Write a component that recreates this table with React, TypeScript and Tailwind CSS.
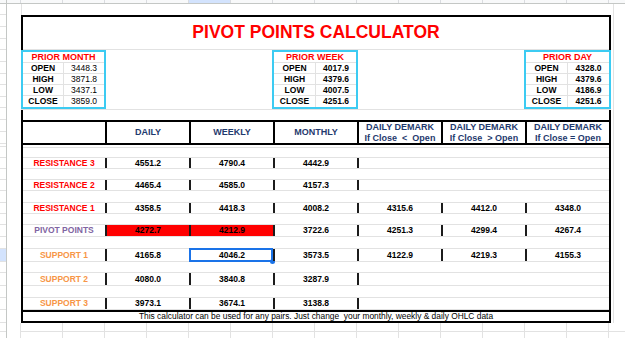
import React from 'react';

interface Prior {
  title: string;
  width: string;
  labelWidth: string;
  bold: boolean;
  rows: [string, string][];
}

interface Level {
  label: string;
  color: string;
  values: (string | null)[];
  red?: boolean;
  selected?: number;
}

const priors: Prior[] = [
  {
    title: 'PRIOR MONTH',
    width: 'w-[85px]',
    labelWidth: 'w-[41px]',
    bold: false,
    rows: [['OPEN', '3448.3'], ['HIGH', '3871.8'], ['LOW', '3437.1'], ['CLOSE', '3859.0']],
  },
  {
    title: 'PRIOR WEEK',
    width: 'w-[86px]',
    labelWidth: 'w-[42px]',
    bold: true,
    rows: [['OPEN', '4017.9'], ['HIGH', '4379.6'], ['LOW', '4007.5'], ['CLOSE', '4251.6']],
  },
  {
    title: 'PRIOR DAY',
    width: 'w-[87px]',
    labelWidth: 'w-[42px]',
    bold: true,
    rows: [['OPEN', '4328.0'], ['HIGH', '4379.6'], ['LOW', '4186.9'], ['CLOSE', '4251.6']],
  },
];

const headers: string[][] = [
  ['DAILY'],
  ['WEEKLY'],
  ['MONTHLY'],
  ['DAILY DEMARK', 'If Close  <  Open'],
  ['DAILY DEMARK', 'If Close  > Open'],
  ['DAILY DEMARK', 'If Close = Open'],
];

const RED = 'text-[#ff0000]';
const PURPLE = 'text-[#8064a2]';
const ORANGE = 'text-[#f79646]';

// one entry per sheet row between header and footer, null = blank spacer row
const rows: { h: string; level: Level | null }[] = [
  { h: 'h-[10px]', level: null },
  { h: 'h-[11px]', level: { label: 'RESISTANCE 3', color: RED, values: ['4551.2', '4790.4', '4442.9', null, null, null] } },
  { h: 'h-[11px]', level: null },
  { h: 'h-[11px]', level: { label: 'RESISTANCE 2', color: RED, values: ['4465.4', '4585.0', '4157.3', null, null, null] } },
  { h: 'h-[12px]', level: null },
  { h: 'h-[11px]', level: { label: 'RESISTANCE 1', color: RED, values: ['4358.5', '4418.3', '4008.2', '4315.6', '4412.0', '4348.0'] } },
  { h: 'h-[11px]', level: null },
  { h: 'h-[12px]', level: { label: 'PIVOT POINTS', color: PURPLE, red: true, values: ['4272.7', '4212.9', '3722.6', '4251.3', '4299.4', '4267.4'] } },
  { h: 'h-[12px]', level: null },
  { h: 'h-[13px]', level: { label: 'SUPPORT 1', color: ORANGE, selected: 1, values: ['4165.8', '4046.2', '3573.5', '4122.9', '4219.3', '4155.3'] } },
  { h: 'h-[11px]', level: null },
  { h: 'h-[13px]', level: { label: 'SUPPORT 2', color: ORANGE, values: ['4080.0', '3840.8', '3287.9', null, null, null] } },
  { h: 'h-[12px]', level: null },
  { h: 'h-[12px]', level: { label: 'SUPPORT 3', color: ORANGE, values: ['3973.1', '3674.1', '3138.8', null, null, null] } },
];

// row header strip on the far left (sheet rows)
const sheetRows = [
  'h-[11px]', 'h-[12px]', 'h-[12px]', 'h-[11px]', 'h-[12px]', 'h-[12px]', 'h-[11px]', 'h-[12px]',
  'h-[11px]', 'h-[12px]', 'h-[12px]', 'h-[12px]', 'h-[3px]', 'h-[11px]', 'h-[11px]', 'h-[11px]',
  'h-[11px]', 'h-[12px]', 'h-[11px]', 'h-[11px]', 'h-[12px]', 'h-[12px]', 'h-[13px]', 'h-[11px]',
  'h-[13px]', 'h-[12px]', 'h-[12px]', 'h-[13px]',
];

const sheetCols = Array.from({ length: 14 }, (_, i) => i);

function PriorBox({ prior }: { prior: Prior }) {
  return (
    <div className={`${prior.width} h-[59px] border-2 border-[#3ccbf2] bg-white flex flex-col`}>
      <div className="h-[11px] border-b border-[#e2e2e2] flex items-center justify-center text-[9px] leading-none font-bold text-[#ff0000]">
        {prior.title}
      </div>
      {prior.rows.map(([k, v], i) => (
        <div key={k} className={`h-[11px] flex ${i < 3 ? 'border-b border-[#e2e2e2]' : ''}`}>
          <div className={`${prior.labelWidth} border-r border-[#e2e2e2] flex items-center justify-center text-[8.5px] leading-none font-bold`}>
            {k}
          </div>
          <div className={`flex-1 flex items-center justify-center text-[8.5px] leading-none ${prior.bold ? 'font-bold' : 'font-normal'}`}>
            {v}
          </div>
        </div>
      ))}
    </div>
  );
}

function DataRow({ h, level }: { h: string; level: Level | null }) {
  return (
    <div className={`${h} flex border-b border-[#e2e2e2]`}>
      <div className={`w-[82px] flex items-center justify-center text-[8.5px] leading-none font-bold ${level?.color ?? ''}`}>
        {level?.label}
      </div>
      {headers.map((_, i) => {
        const v = level?.values[i] ?? null;
        const prev = i > 0 ? level?.values[i - 1] ?? null : null;
        const edge = v !== null || prev !== null;
        const red = level?.red && i < 2;
        return (
          <div
            key={i}
            className={`relative w-[84px] flex items-center justify-center text-[8.5px] leading-none font-bold ${
              edge ? 'border-l-2 border-[#1c1c1c]' : 'border-l-2 border-transparent'
            } ${red ? 'bg-[#ff0000]' : ''}`}
          >
            {v}
            {level?.selected === i && (
              <>
                <span className="absolute -left-[2px] -top-[1px] right-0 -bottom-[1px] border-2 border-[#1a73e8]" />
                <span className="absolute -right-[2px] -bottom-[3px] w-[5px] h-[5px] rounded-full bg-[#1a73e8]" />
              </>
            )}
          </div>
        );
      })}
    </div>
  );
}

export default function App() {
  return (
    <div className="w-[625px] h-[338px] overflow-hidden bg-white flex flex-col text-black font-['Liberation_Sans',Arial,sans-serif]">
      {/* sheet column headers */}
      <div className="h-[4px] flex border-b border-[#c4c7c5] bg-[#f8f9fa]">
        <div className="w-[7px] border-r border-[#c4c7c5]" />
        <div className="w-[14px] border-r border-[#dadce0]" />
        {sheetCols.map((i) => (
          <div key={i} className={`w-[42px] border-r border-[#dadce0] ${i === 4 ? 'bg-[#d3e3fd]' : ''}`} />
        ))}
      </div>

      <div className="flex">
        {/* sheet row headers */}
        <div className="w-[7px] flex flex-col border-r border-[#c4c7c5]">
          {sheetRows.map((h, i) => (
            <div key={i} className={`${h} border-b border-[#e2e2e2] ${i === 22 ? 'bg-[#d3e3fd]' : ''}`} />
          ))}
        </div>
        <div className="w-[14px]" />

        <div className="w-[590px] flex flex-col">
          <div className="h-[11px] border-l border-[#e2e2e2]" />

          {/* calculator */}
          <div className="h-[308px] border-2 border-black flex flex-col">
            <div className="h-[33px] border-b border-[#e2e2e2] flex items-center justify-center text-[17.5px] leading-none font-bold text-[#ff0000]">
              PIVOT POINTS CALCULATOR
            </div>

            <div className="h-[60px] border-b border-[#e2e2e2] -mx-[2px]">
              <div className="flex justify-between items-start">
                {priors.map((p) => (
                  <PriorBox key={p.title} prior={p} />
                ))}
              </div>
            </div>

            <div className="mt-[10px] h-[25px] border-y-2 border-black flex">
              <div className="w-[82px]" />
              {headers.map((lines, i) => (
                <div
                  key={i}
                  className="w-[84px] border-l-2 border-black flex flex-col items-center justify-center text-[9px] leading-[11px] font-bold text-[#1f3a6e] whitespace-pre"
                >
                  {lines.map((l) => (
                    <span key={l}>{l}</span>
                  ))}
                </div>
              ))}
            </div>

            <div className="h-[3px] border-b border-[#e2e2e2]" />

            {rows.map((r, i) => (
              <DataRow key={i} h={r.h} level={r.level} />
            ))}

            <div className="flex-1 border-t-2 border-black flex items-center justify-center text-[8.4px] leading-none whitespace-pre">
              This calculator can be used for any pairs. Just change  your monthly, weekly &amp; daily OHLC data
            </div>
          </div>
        </div>

        <div className="w-[14px] flex">
          <div className="ml-[2px] border-l border-[#e2e2e2]" />
        </div>
      </div>

      {/* empty sheet cells below */}
      <div className="flex-1 flex">
        <div className="w-[7px] border-r border-[#c4c7c5]">
          <div className="h-[9px] border-b border-[#e2e2e2]" />
        </div>
        <div className="w-[14px] border-r border-[#e2e2e2]" />
        {sheetCols.map((i) => (
          <div key={i} className="w-[42px] border-r border-[#e2e2e2]">
            <div className="h-[9px] border-b border-[#e2e2e2]" />
          </div>
        ))}
        <div className="flex-1">
          <div className="h-[9px] border-b border-[#e2e2e2]" />
        </div>
      </div>
    </div>
  );
}
